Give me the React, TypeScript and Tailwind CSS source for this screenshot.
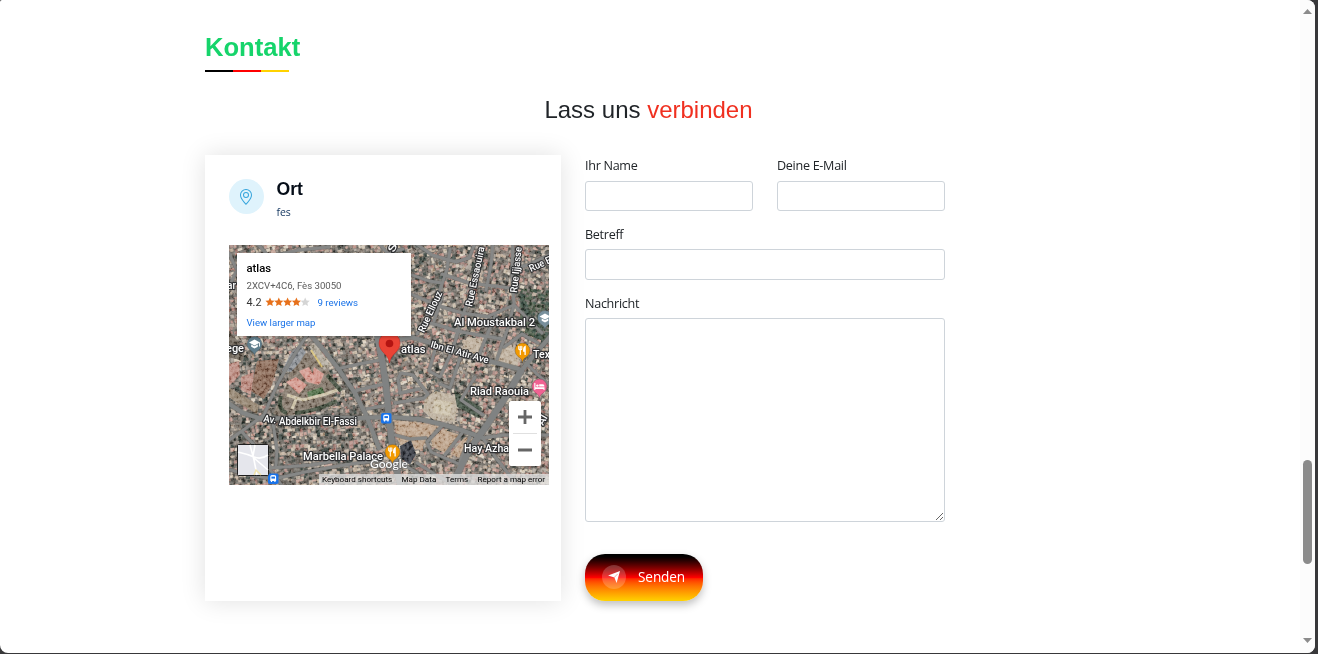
import React from "react";

const random = (seed: number) => {
  let s = seed;
  return () => {
    s = (s * 1664525 + 1013904223) % 4294967296;
    return s / 4294967296;
  };
};

const roofs = ["#a39a90", "#8f857c", "#b7a797", "#a98078", "#b98f84", "#83796f", "#c6b9a6", "#9c7a72", "#746b64", "#d6cab8", "#aea192", "#c09d90", "#baa793"];
const darks = ["#40453f", "#4d4e48", "#38423c", "#5b564f"];

const blocks = (() => {
  const r = random(17);
  const list: { x: number; y: number; w: number; h: number; a: number; c: string }[] = [];
  for (let gy = -4; gy < 244; gy += 3.9) {
    for (let gx = -4; gx < 324; gx += 4.1) {
      const west = gx < 135 && gy > 110;
      const park = gx > 288 && gy > 42 && gy < 90;
      const pick = r();
      const w = 2 + r() * 3.4;
      const h = 1.8 + r() * 2.8;
      let c = roofs[Math.floor(r() * roofs.length)];
      if (pick < (west ? 0.42 : 0.17)) c = darks[Math.floor(r() * darks.length)];
      if (park && pick < 0.85) c = pick < 0.4 ? "#33453a" : "#42513f";
      list.push({ x: gx + r() * 2, y: gy + r() * 2, w, h, a: west ? -8 : gx > 230 ? 18 : -15, c });
    }
  }
  return list;
})();

const wideRoads = [
  "M147 84L153 115L157 140L160 172L163 200L167 222L172 242",
  "M292 126L278 150L258 180L240 205L222 242",
];
const midRoads = [
  "M78 86L93 103L108 122L126 148L137 170L143 185L150 203",
  "M-4 156L14 168L33 174L80 172L130 173L160 172L190 174L212 179L232 185L254 193",
  "M324 88L306 109L292 126",
  "M157 98L182 92L202 98L222 105L240 110L264 117L290 124",
];
const roads = [
  "M78 90L62 115L48 140L35 170L13 186L-4 198",
  "M221 4L218 24L212 42L202 65L188 89",
  "M183 30L200 36L213 38", "M182 49L207 60L233 68L260 72",
  "M186 -2L203 10L227 17L240 13L246 -2", "M213 29L240 38L282 43",
  "M251 8L246 34L234 70L226 97L222 108", "M264 -2L262 20L257 45",
  "M284 -4L283 28L285 59L280 80L268 114",
  "M283 24L299 20L322 9", "M202 78L232 87L274 94",
  "M213 52L205 76", "M266 71L256 95L249 113",
  "M260 71L285 60L301 76L313 88", "M275 102L293 89L309 98",
  "M108 124L130 119L151 115", "M126 146L141 142L156 139", "M138 164L148 162L159 160",
  "M166 158L195 153L199 149L184 130L172 128L169 134L171 147",
  "M171 148L190 144", "M207 101L200 126L211 132L222 108",
  "M232 110L221 143L211 139", "M246 132L232 155L254 170",
  "M166 190L181 194L197 193", "M213 181L198 197L202 207L230 219L243 206",
  "M233 188L216 210", "M241 192L231 216", "M254 193L275 190L322 190",
  "M254 193L267 213L282 232L290 242",
  "M188 218L207 230L224 239", "M172 218L188 228L202 242",
  "M44 178L48 205L47 221", "M-2 224L20 230L45 234L76 227L115 220L151 215",
  "M39 222L54 242", "M13 187L27 202L42 223L82 220L105 216",
  "M299 120L309 130L323 142", "M307 194L307 214",
  "M0 8L8 25L0 42", "M28 -2L40 12L70 5L100 2", "M150 -2L158 8L174 4",
];

type LabelProps = { x: number; y: number; w: number; s?: number; a?: number; children: string };
const Label = ({ x, y, w, s = 11.3, a = 0, children }: LabelProps) => (
  <text
    x={x}
    y={y}
    fontSize={s}
    textLength={w}
    lengthAdjust="spacingAndGlyphs"
    transform={`rotate(${a} ${x} ${y})`}
    fill="#fff"
    stroke="#303133"
    strokeWidth="2.4"
    strokeLinejoin="round"
    paintOrder="stroke"
  >
    {children}
  </text>
);

const Pin = ({ x, y, color, kind }: { x: number; y: number; color: string; kind: "food" | "school" | "bed" }) => (
  <g transform={`translate(${x} ${y})`}>
    <path d="M0 12C-.5 7.800-2 7.300-4.600 5.400A7.500 7.500 0 1 1 4.600 5.400C2 7.300.5 7.800 0 12Z" fill={color} stroke="#444" strokeOpacity=".5" strokeWidth=".6" />
    {kind === "food" && (
      <g stroke="#fff" strokeLinecap="round" fill="none">
        <path d="M-3.700-4.600v2.700q1.500 1.800 3 0v-2.700M-2.200-4.600v8" strokeWidth="1.100" />
        <path d="M2.600 3.400v-7.800q-1.600.8-1.400 4.400h1.400" strokeWidth="1.300" />
      </g>
    )}
    {kind === "school" && (
      <g fill="#fff">
        <path d="M-5.500-2L0-5l5.500 3L0 1Z" />
        <path d="M-3.300 0L0 1.800 3.300 0v2.300L0 4-3.300 2.300Z" />
        <path d="M4.600-2h.9v4h-.9Z" />
      </g>
    )}
    {kind === "bed" && (
      <g fill="#fff">
        <path d="M-5.200-4h1.100v4.300H5V3H4V1.900h-8.100V3h-1.100ZM-.3-2.700h3.500Q5-2.700 5-.4H-.3Z" />
        <circle cx="-2.100" cy="-1.400" r="1.200" />
      </g>
    )}
  </g>
);

const Transit = ({ x, y }: { x: number; y: number }) => (
  <g transform={`translate(${x} ${y})`}>
    <rect width="10.500" height="10.500" rx="1.800" fill="#1a73e8" />
    <path d="M2.300 2.800q0-1.200 2.900-1.200t2.900 1.200v4.600h-.6v1.100h-1.200v-1.100H4.100v1.100H2.900V7.400h-.6Z" fill="#fff" />
    <path d="M3.400 3.100h3.600v2H3.400Z" fill="#1a73e8" />
  </g>
);

const Satellite = () => (
  <svg viewBox="0 0 320 240" className="block h-60 w-80 font-medium" fontFamily="Roboto, sans-serif">
    <defs>
      <filter id="grain" x="0" y="0" width="100%" height="100%">
        <feTurbulence type="fractalNoise" baseFrequency=".3" numOctaves="3" seed="8" />
        <feColorMatrix values="2.4 0 0 0 -.7  2.4 0 0 0 -.7  2.4 0 0 0 -.7  0 0 0 0 1" />
      </filter>
      <filter id="soften"><feGaussianBlur stdDeviation=".5" /></filter>
    </defs>
    <rect width="320" height="240" fill="#6c6861" />
    <g filter="url(#soften)">
      {blocks.map((b, i) => (
        <rect key={i} x={b.x} y={b.y} width={b.w} height={b.h} fill={b.c} transform={`rotate(${b.a} ${b.x} ${b.y})`} />
      ))}
      <path d="M28 116l22-2-7 26-8 14-13-8Z" fill="#856553" />
      <path d="M0 119l10-3 1 14-11 11ZM12 132l13-5-3 23-10-5Z" fill="#b5857a" />
      <path d="M-1 142l14 8 17 10-2 9L-1 152Z" fill="#8c7b68" />
      <path d="M0 86l16 18-2 12-14-4Z" fill="#655b51" />
      <path d="M65 112l16-5 17 15 12 22-14 18-40 10-12-3 13-28Z" fill="#7c7063" />
      <path d="M57 137l10-5 11 8-8 9ZM70 126l10-4 10 18-12-3ZM85 122l10 7-4 10-9-3Z" fill="#cf9388" />
      <path d="M78 147l15-5 3 7-16 5Z" fill="#4e6b45" />
      <path d="M58 150l16 5 23-6 14-5M68 152l-5 12" stroke="#c9bea3" strokeWidth="3" fill="none" />
      <path d="M66 168q18-1 42-12M52 151q-4 14 6 17M98 130l14 16" stroke="#3c4638" strokeWidth="4" fill="none" />
      <path d="M62 108l8-8 7 7-6 10-9 10-9-1Z" fill="#85898e" />
      <path d="M80 101l7-3 14 23-6 4Z" fill="#aaa294" />
      <path d="M82 105l11 17" stroke="#d3bd77" strokeWidth="2" />
      <path d="M165 175l30 3 14 3-13 15-3 9-20-3-5-8ZM213 184l18 6-14 19-13-7-2-7ZM236 192l10 3-13 19-12-5Z" fill="#b79c83" />
      <path d="M196 152l11-6 22 6-3 25-20-1-12-10Z" fill="#b8ab98" />
      <path d="M205 154l18 3-2 14-17-3Z" fill="#c8bda6" />
      <path d="M238 92l16 2-5 16-16-4ZM265 108l13-9 14 8-4 15-22-6Z" fill="#b9aa97" />
      <path d="M171 201l11-6 5 14-6 11-9-7Z" fill="#343941" />
      <path d="M225 145l10 7 18 11-3 10-22-11Z" fill="#414d40" />
      <path d="M289 47l10 22 15 16" stroke="#31433a" strokeWidth="6" fill="none" opacity=".6" />
    </g>
    <rect width="320" height="240" filter="url(#grain)" opacity=".6" className="mix-blend-soft-light" />
    <g fill="none" strokeLinejoin="round" strokeLinecap="round">
      {roads.map((d) => <path key={d} d={d} stroke="#5b5c5b" strokeWidth="4.200" opacity=".45" />)}
      {midRoads.map((d) => <path key={d} d={d} stroke="#5b5d5c" strokeWidth="5.600" opacity=".5" />)}
      {wideRoads.map((d) => <path key={d} d={d} stroke="#5b5d5c" strokeWidth="7.600" opacity=".5" />)}
      {roads.map((d) => <path key={d} d={d} stroke="#868786" strokeWidth="2.900" />)}
      {midRoads.map((d) => <path key={d} d={d} stroke="#838584" strokeWidth="4.200" />)}
      {wideRoads.map((d) => <path key={d} d={d} stroke="#808282" strokeWidth="6.200" />)}
    </g>
    <Label x={195} y={88} w={44} s={10} a={-65}>Rue Ellouz</Label>
    <Label x={243} y={62} w={61} s={10} a={-78}>Rue Essaouira</Label>
    <Label x={288} y={48} w={46} s={10} a={-84}>Rue Ijjasse</Label>
    <Label x={302} y={27} w={23} s={10} a={-25}>Rue E</Label>
    <Label x={165} y={8} w={13} s={10.5} a={-66}>St</Label>
    <Label x={-2} y={44} w={9}>ar</Label>
    <Label x={225} y={81} w={81}>Al Moustakbal 2</Label>
    <Label x={172} y={107.5} w={24.5}>atlas</Label>
    <Label x={201} y={102} w={60} s={9.5} a={16}>Ibn El Atir Ave</Label>
    <Label x={304} y={113} w={17}>Tex</Label>
    <Label x={241} y={150} w={59}>Riad Raouia</Label>
    <Label x={34} y={176.5} w={13} s={10} a={9}>Av.</Label>
    <Label x={50} y={179.5} w={78} s={10}>Abdelkbir El-Fassi</Label>
    <Label x={74} y={215} w={80}>Marbella Palace</Label>
    <Label x={235} y={207} w={45}>Hay Azha</Label>
    <Label x={-3} y={106.500} w={18}>ege</Label>
    <Label x={314} y={181} w={10} s={10.5} a={-60}>Al</Label>
    <Pin x={25.500} y={99.500} color="#607d8b" kind="school" />
    <Pin x={316} y={73.500} color="#78909c" kind="school" />
    <Pin x={293.500} y={106} color="#f29900" kind="food" />
    <Pin x={163.500} y={207.500} color="#f29900" kind="food" />
    <Pin x={310.500} y={142} color="#f06292" kind="bed" />
    <Transit x={152} y={168} />
    <Transit x={39} y={228.500} />
    <path d="M160.500 118C159.500 109 150 107 150 98a10.500 10.500 0 0 1 21 0C171 107 161.500 109 160.500 118Z" fill="#ea4335" stroke="#c5221f" strokeWidth=".5" />
    <circle cx="160.500" cy="98.500" r="3.800" fill="#b31412" />
    <text x="141" y="222.500" fontSize="11.500" textLength="38" lengthAdjust="spacingAndGlyphs" fill="#fff" stroke="#6a6a6a" strokeWidth="1.200" paintOrder="stroke" fontFamily="Lato, sans-serif">Google</text>
    <rect x="8.500" y="199.500" width="31" height="31" rx="1" fill="#e5e6ec" stroke="#1f1f1f" />
    <path d="M9 207q9 2 16 5t14-2M21 200l4 15 3 15M25 213l14 12M26 200l-2 11" fill="none" stroke="#fff" strokeWidth="1.600" />
    <path d="M25 230l2-5 5 5" stroke="#f2e3ad" strokeWidth="1.500" fill="none" />
  </svg>
);

const stars = "M5 .5l1.350 2.950 3.200.35-2.400 2.150.7 3.150L5 7.500 2.150 9.100l.7-3.150L.45 3.800l3.200-.35Z";

const MapView = () => (
  <div className="relative h-60 w-80 overflow-hidden font-['Roboto',sans-serif]">
    <Satellite />
    <div className="absolute left-2 top-2 flex h-[83px] w-[174px] flex-col bg-white pl-[9.500px] pt-[9px] text-[10px] shadow-[0_1px_3px_rgba(0,0,0,0.3)]">
      <div className="h-[18px] pt-px text-[11.300px] font-medium leading-3 text-black">atlas</div>
      <div className="h-[17px] text-[9.600px] leading-3 text-[#5b5b5b]">2XCV+4C6, Fès 30050</div>
      <div className="flex h-5 leading-3 text-[#333]">
        <span className="w-[18px] text-[10.800px] leading-[11px]">4.2</span>
        <svg viewBox="0 0 45 10" className="h-[10px] w-[45px]">
          {[0, 1, 2, 3, 4].map((i) => (
            <path key={i} d={stars} transform={`translate(${i * 8.8} 0)`} fill={i < 4 ? "#e7711b" : "#d5d5d5"} />
          ))}
        </svg>
        <span className="ml-2 text-[9.700px] text-[#1a73e8]">9 reviews</span>
      </div>
      <div className="text-[9.600px] leading-3 text-[#1a73e8]">View larger map</div>
    </div>
    <div className="absolute left-[280px] top-[156px] flex h-[65px] w-8 flex-col items-center rounded-[2px] bg-white shadow-[0_1px_3px_rgba(0,0,0,0.3)]">
      <svg viewBox="0 0 32 65" className="h-[65px] w-8">
        <path d="M9 16h14M16 9v14M9 49h14" stroke="#666" strokeWidth="2.800" />
        <path d="M4 32.500h24" stroke="#e0e0e0" />
      </svg>
    </div>
    <div className="absolute bottom-0 right-0 flex h-[11px] w-[230px] gap-[9.500px] whitespace-nowrap bg-[#e5e5e5]/75 pl-[3px] text-[8.100px] leading-[11px] text-black">
      <span className="w-[70px]">Keyboard shortcuts</span>
      <span className="w-[34.500px]">Map Data</span>
      <span className="w-[22.500px]">Terms</span>
      <span>Report a map error</span>
    </div>
  </div>
);

const labelClass = "block text-[12.600px] leading-5 tracking-[-0.3px] text-[#212529]";
const fieldClass = "block w-full rounded-[3px] border border-[#ced4da] bg-white px-2 text-sm outline-none";

export default function App() {
  return (
    <div className="h-[654px] w-[1318px] overflow-hidden bg-[#38383a] pb-px pr-[3px]">
      <div className="flex h-full overflow-hidden rounded-b-lg rounded-tl-[2px] rounded-tr-lg bg-white">
        <main className="w-[1300px] pl-[205px] pt-8 font-['Open_Sans','Noto_Sans',sans-serif]">
          <h2 className="h-[38px] font-['Liberation_Sans',Arial,sans-serif] text-[25.600px] font-bold leading-[30px] text-[#16d46b]">Kontakt</h2>
          <div className="flex h-0.5 w-[84px]">
            <span className="flex-1 bg-black" />
            <span className="flex-1 bg-[#f00]" />
            <span className="flex-1 bg-[#ffd200]" />
          </div>
          <h3 className="mt-[23px] w-[887px] text-center font-['Liberation_Sans',Arial,sans-serif] text-2xl leading-[30px] text-[#212529]">
            Lass uns <span className="text-[#f03020]">verbinden</span>
          </h3>
          <div className="mt-[30px] flex gap-6">
            <section className="h-[446px] w-[356px] bg-white p-6 shadow-[0_0_24px_rgba(0,0,0,0.12)]">
              <div className="mb-[30px] flex h-9 gap-[12.500px]">
                <div className="flex size-[35px] items-center justify-center rounded-full bg-[#dff3fc] pr-px">
                  <svg viewBox="0 0 16 16" className="size-4 fill-[#34a4dc]">
                    <path d="M12.166 8.940c-.524 1.062-1.234 2.120-1.960 3.070A32 32 0 0 1 8 14.580a32 32 0 0 1-2.206-2.570c-.726-.95-1.436-2.008-1.960-3.070C3.304 7.867 3 6.862 3 6a5 5 0 0 1 10 0c0 .862-.305 1.867-.834 2.940M8 16s6-5.686 6-10A6 6 0 0 0 2 6c0 4.314 6 10 6 10" />
                    <path d="M8 8a2 2 0 1 1 0-4 2 2 0 0 1 0 4m0 1a3 3 0 1 0 0-6 3 3 0 0 0 0 6" />
                  </svg>
                </div>
                <div>
                  <h4 className="h-[26px] font-['Liberation_Sans',Arial,sans-serif] text-[17.600px] font-bold leading-5 text-[#050d18]">Ort</h4>
                  <p className="text-[10.500px] leading-[14px] tracking-[-0.1px] text-[#12355f]">fes</p>
                </div>
              </div>
              <MapView />
            </section>
            <form className="w-[360px]">
              <div className="flex gap-6">
                <label className="flex-1"><span className={`${labelClass} pt-px`}>Ihr Name</span><input className={`${fieldClass} mt-[5px] h-[30px]`} /></label>
                <label className="flex-1"><span className={`${labelClass} pt-px`}>Deine E-Mail</span><input className={`${fieldClass} mt-[5px] h-[30px]`} /></label>
              </div>
              <label className="mt-3.5 block"><span className={labelClass}>Betreff</span><input className={`${fieldClass} mt-1 h-[31px]`} /></label>
              <label className="mt-3.5 block"><span className={labelClass}>Nachricht</span><textarea className={`${fieldClass} mt-1 h-[204px] resize`} /></label>
              <button type="button" className="mt-8 flex h-[47px] w-[118px] items-center rounded-[20px] bg-linear-to-b from-black via-[#f00] to-[#ffd200] pb-px pl-[17px] text-white shadow-[0_4px_8px_rgba(0,0,0,0.25)]">
                <span className="flex size-6 items-center justify-center rounded-full bg-white/20">
                  <svg viewBox="0 0 12 12" className="size-3 fill-white"><path d="M12 0L8.600 12 6.400 6.400.1 4.500Z" /><path d="M6 6.700L9.700 2.900" stroke="#ef5148" strokeWidth=".5" /></svg>
                </span>
                <span className="ml-3 pt-px text-[13.600px] tracking-[-0.1px]">Senden</span>
              </button>
            </form>
          </div>
        </main>
        <div className="flex w-[15px] flex-col items-center bg-[#fcfcfc] pb-2.5 pt-[9px]">
          <svg viewBox="0 0 9 5" className="h-[5px] w-[9px] fill-[#8b8b8b]"><path d="M4.500 0L9 5H0Z" /></svg>
          <div className="mb-[74px] mt-auto h-[104px] w-[9px] rounded-full bg-[#8b8b8b]" />
          <svg viewBox="0 0 9 5" className="h-[5px] w-[9px] shrink-0 fill-[#8b8b8b]"><path d="M0 0h9L4.500 5Z" /></svg>
        </div>
      </div>
    </div>
  );
}
